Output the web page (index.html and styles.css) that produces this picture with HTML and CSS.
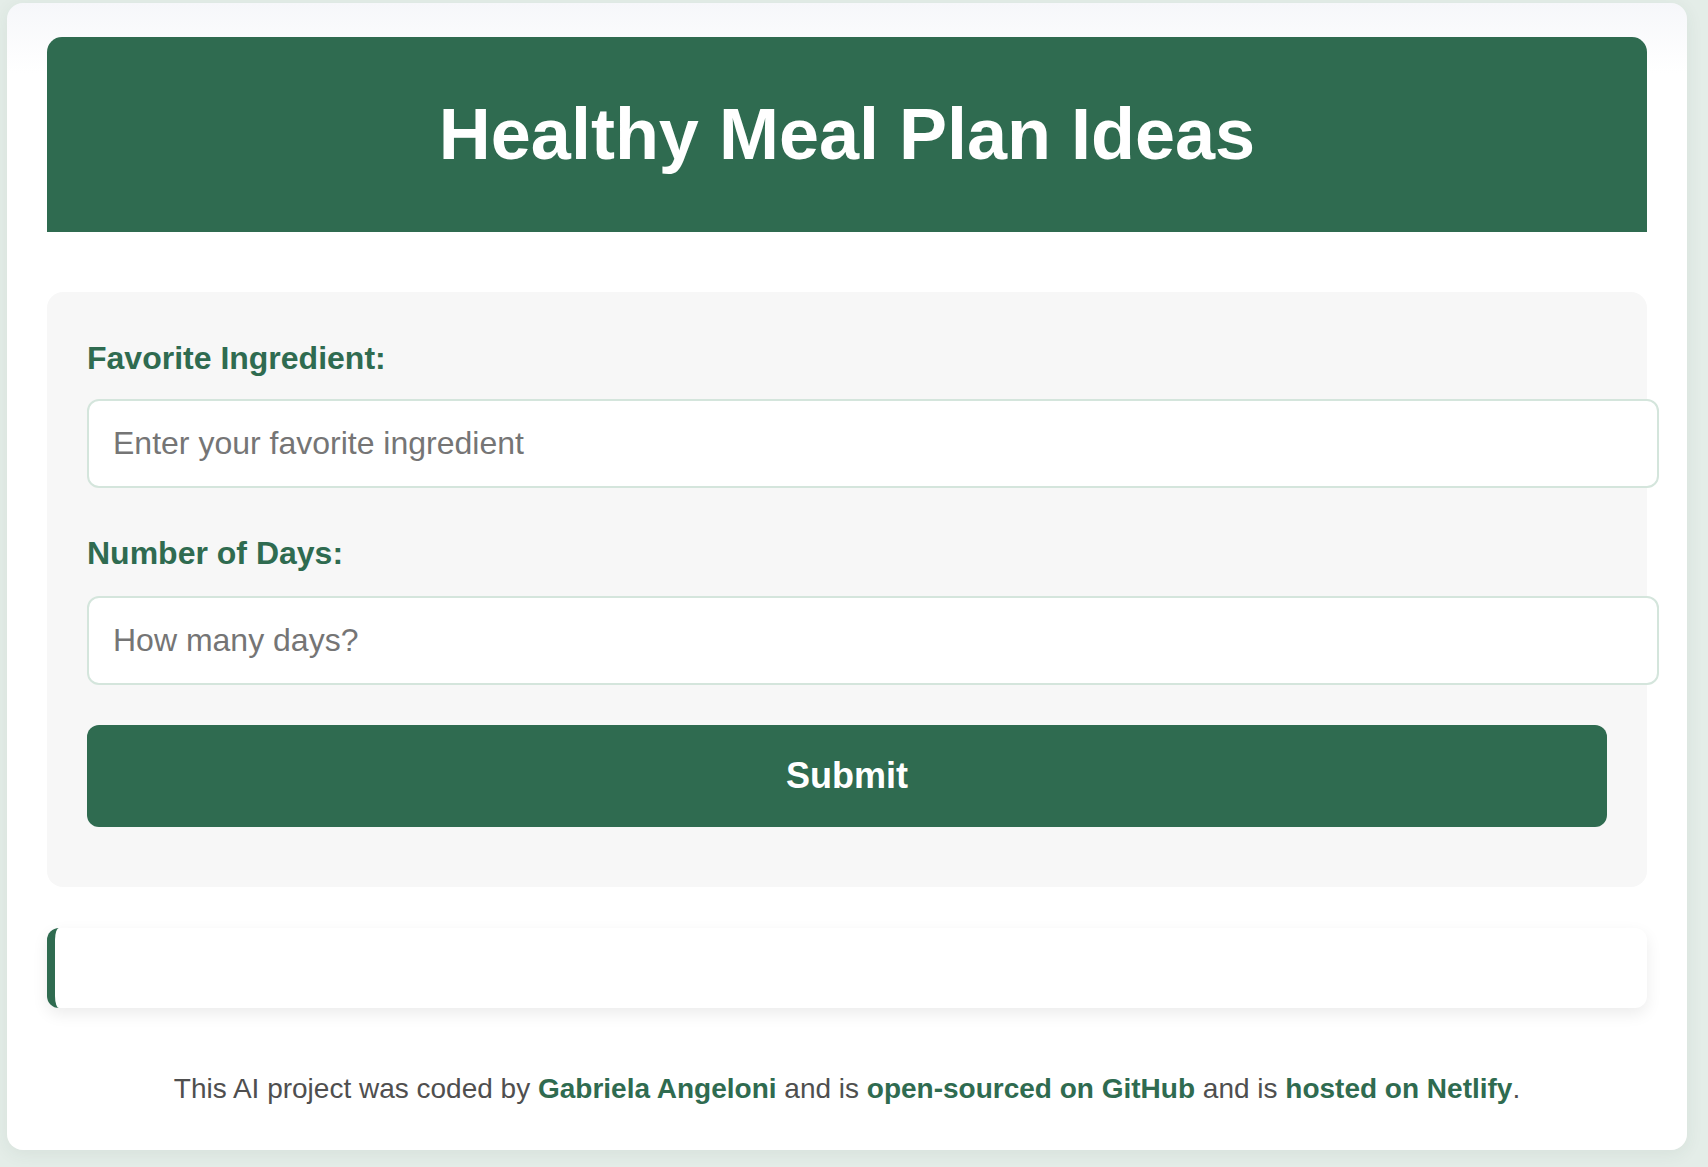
FILE: index.html
```html
<!DOCTYPE html>
<html lang="en">
<head>
<meta charset="utf-8">
<title>Healthy Meal Plan Ideas</title>
<link rel="stylesheet" href="styles.css">
</head>
<body>
<div class="container">
  <header class="hero">
    <h1>Healthy Meal Plan Ideas</h1>
  </header>
  <form class="meal-form">
    <div class="field field-first">
      <label for="ingredient">Favorite Ingredient:</label>
      <input id="ingredient" type="text" placeholder="Enter your favorite ingredient">
    </div>
    <div class="field field-last">
      <label for="days">Number of Days:</label>
      <input id="days" type="text" placeholder="How many days?">
    </div>
    <button type="button" class="submit">Submit</button>
  </form>
  <div class="result"></div>
  <footer class="credits">
    This AI project was coded by <a href="#">Gabriela Angeloni</a> and is <a href="#">open-sourced on GitHub</a> and is <a href="#">hosted on Netlify</a>.
  </footer>
</div>
</body>
</html>
```

FILE: styles.css
```css
html, body {
  margin: 0;
  padding: 0;
}
body {
  background: #e4ede8;
  font-family: "Liberation Sans", Arial, sans-serif;
  min-height: 1167px;
}
.container {
  box-sizing: border-box;
  width: 1680px;
  margin: 3px 0 0 7px;
  padding: 34px 40px 45px;
  background: linear-gradient(to bottom, #f6f7fa 0px, #ffffff 70px);
  border-radius: 16px;
  box-shadow: 0 4px 18px rgba(40, 70, 55, 0.07);
}
.hero {
  background: #2f6b50;
  border-radius: 15px 15px 0 0;
  padding: 56px 0 57px;
  text-align: center;
}
.hero h1 {
  margin: 0;
  color: #ffffff;
  font-size: 72px;
  font-weight: bold;
  line-height: normal;
}
.meal-form {
  margin-top: 60px;
  background: #f7f7f7;
  border-radius: 16px;
  padding: 48px 40px 60px;
}
.field {
  margin-bottom: 47px;
}
.field-last {
  margin-bottom: 40px;
}
.field label {
  display: block;
  color: #2f6b50;
  font-size: 32px;
  font-weight: bold;
  line-height: normal;
  margin-bottom: 24px;
}
.field-first label {
  margin-bottom: 22px;
}
.field input {
  display: block;
  width: 100%;
  box-sizing: content-box;
  padding: 24px 24px;
  border: 2px solid #d4e5dc;
  border-radius: 12px;
  background: #ffffff;
  font-family: "Liberation Sans", Arial, sans-serif;
  font-size: 32px;
  line-height: normal;
  color: #333;
  outline: none;
}
.field input::placeholder {
  color: #757575;
}
.submit {
  display: block;
  width: 100%;
  padding: 30px 0;
  border: none;
  border-radius: 12px;
  background: #2f6b50;
  color: #ffffff;
  font-family: "Liberation Sans", Arial, sans-serif;
  font-size: 36px;
  font-weight: bold;
  line-height: normal;
  cursor: pointer;
}
.result {
  margin-top: 41px;
  height: 80px;
  box-sizing: border-box;
  background: #ffffff;
  border-left: 8px solid #2f6b50;
  border-radius: 12px;
  box-shadow: 0 6px 16px rgba(0, 0, 0, 0.08);
}
.credits {
  margin-top: 65px;
  text-align: center;
  color: #4f4f4f;
  font-size: 28px;
  line-height: 32px;
}
.credits a {
  color: #2f6b50;
  font-weight: bold;
  text-decoration: none;
}
```
